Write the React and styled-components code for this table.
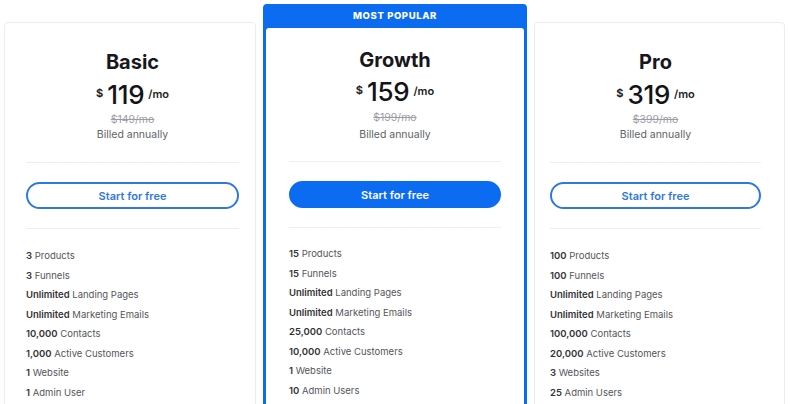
import React from 'react';
import styled, { createGlobalStyle } from 'styled-components';

const GlobalStyle = createGlobalStyle`
  html, body {
    margin: 0;
    padding: 0;
    background: #ffffff;
    overflow: hidden;
  }
  body {
    font-family: Inter, "Noto Sans", "Liberation Sans", sans-serif;
    color: #1b1b1f;
  }
`;

const Page = styled.div`
  display: flex;
  align-items: flex-start;
  gap: 7px;
  padding: 4px 4px 0 4px;
  width: 790px;
  height: 404px;
  box-sizing: border-box;
`;

const Card = styled.div`
  flex: 0 0 ${(p) => p.$width}px;
  box-sizing: border-box;
  margin-top: 18px;
  border: 1px solid #ececee;
  border-radius: 4px;
  background: #fff;
  padding: 25px ${(p) => p.$right}px 20px ${(p) => p.$left}px;
  display: flex;
  flex-direction: column;
`;

const FeaturedCard = styled.div`
  flex: 0 0 264px;
  box-sizing: border-box;
  background: #0b6cf1;
  border: 3px solid #0b6cf1;
  border-top-width: 0;
  border-radius: 4px;
  display: flex;
  flex-direction: column;
`;

const Ribbon = styled.div`
  height: 23px;
  padding-bottom: 1px;
  display: flex;
  align-items: center;
  justify-content: center;
  color: #fff;
  font-size: 9.5px;
  font-weight: 800;
  letter-spacing: 0.6px;
`;

const FeaturedBody = styled.div`
  background: #fff;
  border-radius: 3px 3px 0 0;
  padding: 18px 23px 20px 23px;
  display: flex;
  flex-direction: column;
`;

const Title = styled.h2`
  margin: 0;
  text-align: center;
  font-size: 20px;
  line-height: 28px;
  font-weight: 700;
  color: #17171c;
`;

const PriceRow = styled.div`
  margin-top: ${(p) => (p.$featured ? 2 : 3)}px;
  height: 30px;
  display: flex;
  align-items: center;
  justify-content: center;
  gap: 3px;
`;

const Currency = styled.span`
  font-size: 11px;
  font-weight: 700;
  color: #222;
  margin-top: -2px;
  margin-right: 1px;
`;

const Amount = styled.span`
  font-size: 26px;
  font-weight: 500;
  color: #131318;
  letter-spacing: -0.3px;
`;

const Per = styled.span`
  font-size: 11px;
  font-weight: 600;
  color: #222;
  margin-left: 1px;
`;

const OldPrice = styled.div`
  margin-top: ${(p) => (p.$featured ? 5 : 4)}px;
  text-align: center;
  font-size: 10.5px;
  line-height: 14px;
  color: #9c9ca4;
  text-decoration: line-through;
`;

const Billed = styled.div`
  margin-top: ${(p) => (p.$featured ? 2 : 0)}px;
  text-align: center;
  font-size: 10.5px;
  line-height: 16px;
  color: #5f5f66;
`;

const Divider = styled.hr`
  border: none;
  border-top: 1px solid #efeff1;
  margin: ${(p) => p.$gap}px 0 0 0;
  width: 100%;
`;

const Button = styled.button`
  margin-top: 19px;
  height: 27px;
  width: 100%;
  border-radius: 999px;
  font-family: inherit;
  font-size: 11px;
  font-weight: 600;
  cursor: pointer;
  border: 2px solid ${(p) => (p.$filled ? '#0b6cf1' : '#2f78e0')};
  background: ${(p) => (p.$filled ? '#0b6cf1' : '#fff')};
  color: ${(p) => (p.$filled ? '#fff' : '#2f78e0')};
`;

const Features = styled.ul`
  list-style: none;
  margin: ${(p) => (p.$featured ? 16 : 17)}px 0 0 0;
  padding: 0;
`;

const Feature = styled.li`
  font-size: 9.5px;
  line-height: 19.5px;
  color: #55555c;
  white-space: nowrap;

  b {
    font-weight: 600;
    color: #333338;
  }
`;

const plans = [
  {
    name: 'Basic',
    price: 119,
    old: '$149/mo',
    left: 21,
    right: 16,
    width: 252,
    features: [
      ['3', 'Products'],
      ['3', 'Funnels'],
      ['Unlimited', 'Landing Pages'],
      ['Unlimited', 'Marketing Emails'],
      ['10,000', 'Contacts'],
      ['1,000', 'Active Customers'],
      ['1', 'Website'],
      ['1', 'Admin User'],
    ],
  },
  {
    name: 'Growth',
    price: 159,
    old: '$199/mo',
    featured: true,
    features: [
      ['15', 'Products'],
      ['15', 'Funnels'],
      ['Unlimited', 'Landing Pages'],
      ['Unlimited', 'Marketing Emails'],
      ['25,000', 'Contacts'],
      ['10,000', 'Active Customers'],
      ['1', 'Website'],
      ['10', 'Admin Users'],
    ],
  },
  {
    name: 'Pro',
    price: 319,
    old: '$399/mo',
    left: 15,
    right: 23,
    width: 251,
    features: [
      ['100', 'Products'],
      ['100', 'Funnels'],
      ['Unlimited', 'Landing Pages'],
      ['Unlimited', 'Marketing Emails'],
      ['100,000', 'Contacts'],
      ['20,000', 'Active Customers'],
      ['3', 'Websites'],
      ['25', 'Admin Users'],
    ],
  },
];

const PlanContent = ({ plan }) => (
  <>
    <Title>{plan.name}</Title>
    <PriceRow $featured={plan.featured}>
      <Currency>$</Currency>
      <Amount>{plan.price}</Amount>
      <Per>/mo</Per>
    </PriceRow>
    <OldPrice $featured={plan.featured}>{plan.old}</OldPrice>
    <Billed $featured={plan.featured}>Billed annually</Billed>
    <Divider $gap={plan.featured ? 18 : 19} />
    <Button $filled={plan.featured}>Start for free</Button>
    <Divider $gap={19} />
    <Features $featured={plan.featured}>
      {plan.features.map(([strong, rest]) => (
        <Feature key={strong + rest}>
          <b>{strong}</b> {rest}
        </Feature>
      ))}
    </Features>
  </>
);

const App = () => (
  <>
    <GlobalStyle />
    <Page>
      {plans.map((plan) =>
        plan.featured ? (
          <FeaturedCard key={plan.name}>
            <Ribbon>MOST POPULAR</Ribbon>
            <FeaturedBody>
              <PlanContent plan={plan} />
            </FeaturedBody>
          </FeaturedCard>
        ) : (
          <Card key={plan.name} $width={plan.width} $left={plan.left} $right={plan.right}>
            <PlanContent plan={plan} />
          </Card>
        )
      )}
    </Page>
  </>
);

export default App;
